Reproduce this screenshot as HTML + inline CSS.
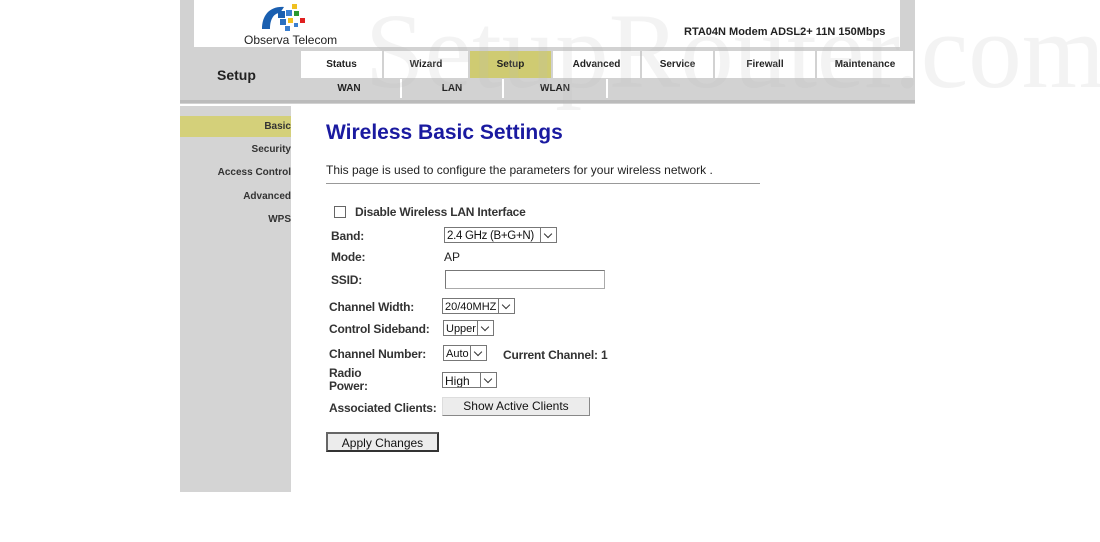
<!DOCTYPE html>
<html><head><style>
body{margin:0;width:1100px;height:542px;background:#fff;position:relative;overflow:hidden;font-family:"Liberation Sans",Arial,sans-serif;}
.a{position:absolute;}
.tab{position:absolute;top:51px;height:27px;background:#fff;font-size:10px;font-weight:bold;color:#222;text-align:center;line-height:27px;}
.sub{position:absolute;top:79px;height:19px;font-size:10px;font-weight:bold;color:#222;text-align:center;line-height:19px;border-right:2px solid #fff;}
.side{position:absolute;left:180px;width:111px;text-align:right;font-size:10px;font-weight:bold;color:#333;}
.lbl{position:absolute;font-size:12px;font-weight:bold;color:#333;letter-spacing:-0.2px}
.sel{position:absolute;height:16px;border:1px solid #777;background:#fff;font-size:12px;line-height:16px;padding-left:2px;box-sizing:border-box;color:#111;overflow:hidden;white-space:nowrap}
.sel i{position:absolute;right:0;top:0;width:15px;height:14px;border-left:1px solid #777;font-style:normal;background:#fff}
.sel i:after{content:"";position:absolute;left:4px;top:3px;width:5px;height:5px;border-right:1.5px solid #333;border-bottom:1.5px solid #333;transform:rotate(45deg);}
.btn{position:absolute;background:#ececec;border:1px solid #888;font-size:12px;text-align:center;box-sizing:border-box;color:#111;}
</style></head><body>
<div class="a" style="left:180px;top:0;width:735px;height:104px;background:#d2d2d2"></div>
<div class="a" style="left:194px;top:0;width:706px;height:47px;background:#fff"></div>
<div class="tab" style="left:301px;width:81px">Status</div>
<div class="tab" style="left:384px;width:84px">Wizard</div>
<div class="tab" style="left:470px;width:81px;background:#cfcb72">Setup</div>
<div class="tab" style="left:553px;width:87px">Advanced</div>
<div class="tab" style="left:642px;width:71px">Service</div>
<div class="tab" style="left:715px;width:100px">Firewall</div>
<div class="tab" style="left:817px;width:96px">Maintenance</div>
<div class="sub" style="left:298px;width:102px">WAN</div>
<div class="sub" style="left:402px;width:100px">LAN</div>
<div class="sub" style="left:504px;width:102px">WLAN</div>
<div class="a" style="left:180px;top:100px;width:735px;height:3px;background:#bbb"></div>
<div class="a" style="left:365px;top:-8px;font-family:'Liberation Serif',serif;font-size:107px;color:rgba(190,190,190,0.18);white-space:nowrap;line-height:120px">SetupRouter.com</div>
<svg class="a" style="left:258px;top:1px" width="60" height="33" viewBox="0 0 60 33">
<path d="M4 28 C4 14 12 5 26 6 L22 12 C16 12 12 18 12 28 Z" fill="#1a5fb0"/>
<rect x="20" y="10" width="7" height="7" fill="#1a5fb0"/><rect x="28" y="9" width="6" height="6" fill="#3a7fd0"/>
<rect x="22" y="18" width="6" height="6" fill="#2a70c0"/><rect x="30" y="17" width="5" height="5" fill="#f0c020"/>
<rect x="36" y="10" width="5" height="5" fill="#2a9a30"/><rect x="42" y="17" width="5" height="5" fill="#e02020"/>
<rect x="34" y="3" width="5" height="5" fill="#f0c020"/><rect x="27" y="25" width="5" height="5" fill="#3a7fd0"/>
<rect x="36" y="22" width="4" height="4" fill="#3a7fd0"/>
</svg>
<div class="a" style="left:244px;top:33px;font-size:12px;color:#222">Observa Telecom</div>
<div class="a" style="left:684px;top:26px;font-size:11px;font-weight:bold;color:#222">RTA04N Modem ADSL2+ 11N 150Mbps</div>
<div class="a" style="left:217px;top:67px;font-size:14px;font-weight:bold;color:#222">Setup</div>
<div class="a" style="left:180px;top:106px;width:111px;height:386px;background:#d4d4d4"></div>
<div class="a" style="left:180px;top:116px;width:111px;height:21px;background:#d4d07a"></div>
<div class="side" style="top:121px">Basic</div>
<div class="side" style="top:144px">Security</div>
<div class="side" style="top:167px">Access Control</div>
<div class="side" style="top:191px">Advanced</div>
<div class="side" style="top:214px">WPS</div>
<div class="a" style="left:326px;top:121px;font-size:21px;font-weight:bold;color:#1a1aa0">Wireless Basic Settings</div>
<div class="a" style="left:326px;top:163px;font-size:12px;color:#222">This page is used to configure the parameters for your wireless network .</div>
<div class="a" style="left:326px;top:183px;width:434px;height:1px;background:#999"></div>
<div class="a" style="left:334px;top:206px;width:10px;height:10px;border:1px solid #666"></div>
<div class="lbl" style="left:355px;top:205px">Disable Wireless LAN Interface</div>
<div class="lbl" style="left:331px;top:229px">Band:</div>
<div class="sel" style="left:444px;top:227px;width:113px;font-size:11.5px;letter-spacing:-0.3px">2.4 GHz (B+G+N)<i></i></div>
<div class="lbl" style="left:331px;top:250px">Mode:</div>
<div class="a" style="left:444px;top:250px;font-size:12px;color:#222">AP</div>
<div class="lbl" style="left:331px;top:273px">SSID:</div>
<div class="a" style="left:445px;top:270px;width:158px;height:17px;border:1px solid #aaa;border-top-color:#777;border-left-color:#777"></div>
<div class="lbl" style="left:329px;top:300px">Channel Width:</div>
<div class="sel" style="left:442px;top:298px;width:73px;font-size:11px">20/40MHZ<i></i></div>
<div class="lbl" style="left:329px;top:322px">Control Sideband:</div>
<div class="sel" style="left:443px;top:320px;width:51px;font-size:11px">Upper<i></i></div>
<div class="lbl" style="left:329px;top:347px">Channel Number:</div>
<div class="sel" style="left:443px;top:345px;width:44px;font-size:11px">Auto<i></i></div>
<div class="lbl" style="left:503px;top:348px">Current Channel: 1</div>
<div class="lbl" style="left:329px;top:367px;line-height:13px">Radio<br>Power:</div>
<div class="sel" style="left:442px;top:372px;width:55px">High<i></i></div>
<div class="lbl" style="left:329px;top:401px">Associated Clients:</div>
<div class="btn" style="left:442px;top:397px;width:148px;height:19px;line-height:17px;border-color:#ddd #888 #888 #ddd">Show Active Clients</div>
<div class="btn" style="left:326px;top:432px;width:113px;height:20px;line-height:18px;border:2px solid #333;border-top-color:#666;border-left-color:#666">Apply Changes</div>
</body></html>
